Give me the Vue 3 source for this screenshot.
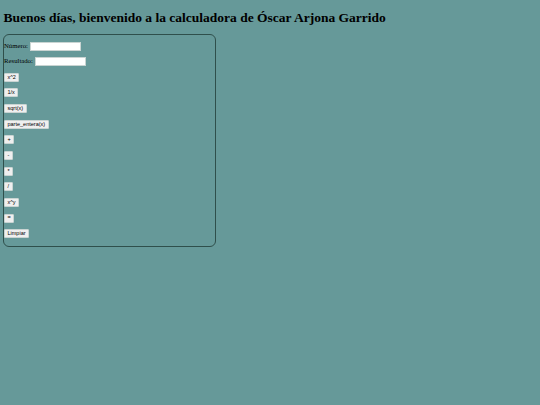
<script setup>
const ops = ['x^2', '1/x', 'sqrt(x)', 'parte_entera(x)', '+', '-', '*', '/', 'x^y', '=', 'Limpiar']
</script>

<template>
  <main class="page">
    <h1 class="title">Buenos días, bienvenido a la calculadora de Óscar Arjona Garrido</h1>
    <form class="calc" @submit.prevent>
      <p class="row"><label>Número: <input type="text" class="field" /></label></p>
      <p class="row"><label>Resultado: <input type="text" class="field" /></label></p>
      <p v-for="op in ops" :key="op" class="row">
        <button type="button" class="btn">{{ op }}</button>
      </p>
    </form>
  </main>
</template>

<style>
html, body { margin: 0; background: #669999; }
</style>

<style scoped>
.page {
  min-height: 405px;
  box-sizing: border-box;
  padding: 9.5px 4px 0 3px;
  background: #669999;
  color: #000;
  font-family: "Liberation Serif", serif;
}
.title {
  margin: 0 0 8.5px 0.5px;
  font-size: 13.5px;
  line-height: 16px;
  font-weight: bold;
}
.calc {
  box-sizing: border-box;
  width: 213px;
  height: 212.5px;
  padding: 6.5px 0 0 0;
  border: 1px solid #2f4f4b;
  border-radius: 6px;
  display: flex;
  flex-direction: column;
  gap: 6.67px;
}
.row {
  margin: 0;
  height: 9px;
  display: flex;
  align-items: center;
  font-size: 6.75px;
}
.field {
  box-sizing: border-box;
  width: 51px;
  height: 9px;
  padding: 0;
  border: 1px solid #c9d4d2;
  background: #fff;
  vertical-align: middle;
}
.btn {
  box-sizing: border-box;
  height: 9px;
  padding: 0 2.5px;
  border: 1px solid #c9d4d2;
  border-radius: 1px;
  background: #efefef;
  color: #000;
  font-family: "Liberation Sans", sans-serif;
  font-size: 5.5px;
  line-height: 1;
}
</style>
